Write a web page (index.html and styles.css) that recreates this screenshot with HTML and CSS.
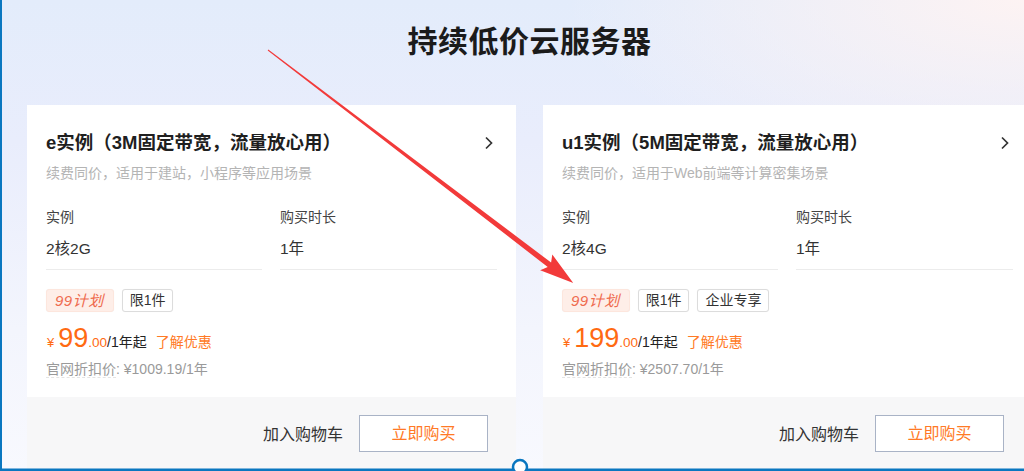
FILE: index.html
```html
<!DOCTYPE html>
<html lang="zh-CN">
<head>
<meta charset="utf-8">
<title>持续低价云服务器</title>
<link rel="stylesheet" href="styles.css">
</head>
<body>
<div class="page">
  <h1 class="title">持续低价云服务器</h1>
  <div class="cards">
    <div class="card">
      <div class="card-body">
        <div class="card-head">
          <h2 class="card-title">e实例（3M固定带宽，流量放心用）</h2>
          <svg class="chev" width="16" height="16" viewBox="0 0 16 16"><path d="M5 2.5 L10.5 8 L5 13.5" fill="none" stroke="#333" stroke-width="1.7"/></svg>
        </div>
        <p class="card-desc">续费同价，适用于建站，小程序等应用场景</p>
        <div class="fields">
          <div class="field"><div class="field-label">实例</div><div class="field-value">2核2G</div></div>
          <div class="field"><div class="field-label">购买时长</div><div class="field-value">1年</div></div>
        </div>
        <div class="tags"><span class="tag tag-plan">99计划</span><span class="tag">限1件</span></div>
        <div class="price-row"><span class="cur">¥</span><span class="int">99</span><span class="dec">.00</span><span class="unit">/1年起</span><span class="promo">了解优惠</span></div>
        <div class="orig"><span class="orig-label">官网折扣价</span>: ¥1009.19/1年</div>
      </div>
      <div class="card-foot"><span class="cart">加入购物车</span><span class="buy">立即购买</span></div>
    </div>
    <div class="card">
      <div class="card-body">
        <div class="card-head">
          <h2 class="card-title">u1实例（5M固定带宽，流量放心用）</h2>
          <svg class="chev" width="16" height="16" viewBox="0 0 16 16"><path d="M5 2.5 L10.5 8 L5 13.5" fill="none" stroke="#333" stroke-width="1.7"/></svg>
        </div>
        <p class="card-desc">续费同价，适用于Web前端等计算密集场景</p>
        <div class="fields">
          <div class="field"><div class="field-label">实例</div><div class="field-value">2核4G</div></div>
          <div class="field"><div class="field-label">购买时长</div><div class="field-value">1年</div></div>
        </div>
        <div class="tags"><span class="tag tag-plan">99计划</span><span class="tag">限1件</span><span class="tag">企业专享</span></div>
        <div class="price-row"><span class="cur">¥</span><span class="int">199</span><span class="dec">.00</span><span class="unit">/1年起</span><span class="promo">了解优惠</span></div>
        <div class="orig"><span class="orig-label">官网折扣价</span>: ¥2507.70/1年</div>
      </div>
      <div class="card-foot"><span class="cart">加入购物车</span><span class="buy">立即购买</span></div>
    </div>
  </div>
</div>
<svg class="overlay" width="1024" height="471" viewBox="0 0 1024 471">
  <g transform="translate(268 50) rotate(37.35)">
    <polygon points="0,-0.5 354,-2.8 350,-10 384,0 350,10 354,2.8 0,0.5" fill="#f23a3a"/>
  </g>
  <rect x="0" y="0" width="2" height="471" fill="#0a77c0"/>
  <rect x="0" y="468.5" width="1024" height="3" fill="#0a77c0"/>
  <circle cx="520" cy="467" r="7" fill="#ffffff" stroke="#0a77c0" stroke-width="2.5"/>
</svg>
</body>
</html>
```
FILE: styles.css
```css
html, body {
  margin: 0;
  padding: 0;
  width: 1024px;
  height: 471px;
  overflow: hidden;
}
body {
  font-family: "Liberation Sans", "Noto Sans CJK SC", sans-serif;
  color: #333;
  background:
    radial-gradient(ellipse 460px 180px at 100% 0%, rgba(253, 243, 243, 1) 0%, rgba(253, 243, 243, 0) 100%),
    linear-gradient(180deg, #e3ecfb 0%, #e9edfc 30%, #f3f5fd 70%, #f8f9fe 100%);
  position: relative;
}
.page {
  width: 1005px;
  padding-left: 27px;
}
.title {
  margin: 0;
  padding-top: 22px;
  height: 40px;
  line-height: 40px;
  margin-bottom: 43px;
  text-align: center;
  font-size: 30px;
  font-weight: bold;
  color: #1b1b1b;
  letter-spacing: 0.5px;
}
.cards {
  display: grid;
  grid-template-columns: 489px 489px;
  column-gap: 27px;
}
.card {
  background: #fff;
  display: flex;
  flex-direction: column;
}
.card-body {
  padding: 24px 19px 18px 19px;
}
.card-head {
  display: flex;
  align-items: center;
  justify-content: space-between;
  height: 28px;
}
.card-title {
  margin: 0;
  font-size: 18.5px;
  font-weight: bold;
  line-height: 28px;
  color: #1f1f1f;
}
.chev {
  display: block;
}
.card-desc {
  margin: 6px 0 0 0;
  font-size: 14px;
  line-height: 20px;
  color: #b4b4b4;
}
.fields {
  margin-top: 24px;
  display: grid;
  grid-template-columns: 216px 217px;
  column-gap: 18px;
}
.field-label {
  font-size: 14px;
  line-height: 20px;
  color: #444;
}
.field-value {
  margin-top: 1px;
  height: 41px;
  line-height: 41px;
  font-size: 15.5px;
  color: #333;
  border-bottom: 1px solid #ececec;
}
.tags {
  margin-top: 19px;
  display: flex;
  gap: 8px;
  height: 23px;
}
.tag {
  box-sizing: border-box;
  height: 23px;
  line-height: 21px;
  padding: 0 7px;
  border: 1px solid #dcdcdc;
  border-radius: 3px;
  font-size: 14px;
  color: #333;
  background: #fff;
  box-shadow: 0 0 1px rgba(0, 0, 0, 0.06);
}
.tag-plan {
  border-color: #fde6dd;
  background: #feeee8;
  color: #ef6b4f;
  font-style: italic;
  font-size: 15px;
  padding: 0 9px 0 8px;
  letter-spacing: 0.5px;
}
.price-row {
  margin-top: 11px;
  height: 30px;
  display: flex;
  align-items: baseline;
  color: #ff6a12;
}
.cur {
  font-size: 13px;
  margin-left: 1px;
  margin-right: 4px;
}
.int {
  font-size: 27px;
  line-height: 30px;
}
.dec {
  font-size: 13.5px;
}
.unit {
  font-size: 14px;
  color: #222;
}
.promo {
  margin-left: 9px;
  font-size: 14px;
  color: #ff7a26;
}
.orig {
  margin-top: 6px;
  font-size: 14px;
  line-height: 20px;
  color: #9a9a9a;
}
.orig-label {
  border-bottom: 1px dashed #e4e4e4;
}
.card-foot {
  background: #f7f7f8;
  height: 72px;
  padding: 0 28px 0 19px;
  display: flex;
  align-items: center;
  justify-content: flex-end;
  gap: 16px;
}
.cart {
  font-size: 16px;
  color: #333;
}
.buy {
  box-sizing: border-box;
  width: 129px;
  height: 37px;
  line-height: 35px;
  text-align: center;
  border: 1px solid #a9b3c6;
  background: #fff;
  color: #ff7a26;
  font-size: 16px;
}
.overlay {
  position: absolute;
  left: 0;
  top: 0;
  pointer-events: none;
}
```
